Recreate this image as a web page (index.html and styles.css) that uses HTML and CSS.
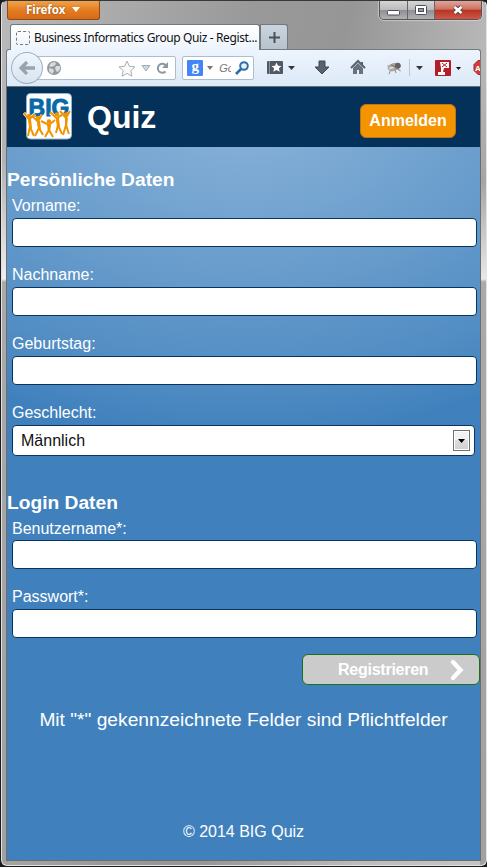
FILE: index.html
```
<!DOCTYPE html>
<html lang="de">
<head>
<meta charset="utf-8">
<title>Business Informatics Group Quiz - Registrierung</title>
<link rel="stylesheet" href="styles.css">
</head>
<body>
<div class="window">
  <div class="titlebar">
    <div class="firefox">Firefox<svg width="8" height="5"><path d="M0 0h8L4 5z" fill="#fff"/></svg></div>
    <div class="controls">
      <span class="ctl min"><svg width="13" height="6"><rect x=".5" y=".5" width="12" height="4.5" rx="1" fill="#fff" stroke="#4b5060"/></svg></span>
      <span class="ctl max"><svg width="12" height="10"><rect x=".5" y=".5" width="11" height="9" rx="1" fill="#fff" stroke="#4b5060"/><rect x="3.5" y="3.5" width="5" height="3" fill="#999" stroke="#4b5060"/></svg></span>
      <span class="ctl close"><svg width="12" height="10"><path d="M2.500 2l7 6M9.500 2l-7 6" stroke="#5a4547" stroke-width="4.600"/><path d="M2.500 2l7 6M9.500 2l-7 6" stroke="#fff" stroke-width="2.600"/></svg></span>
    </div>
  </div>
  <div class="tabs">
    <div class="tab"><span class="favicon"></span><span class="tab-title">Business Informatics Group Quiz - Regist...</span></div>
    <div class="newtab"><svg width="11" height="11"><path d="M5.500 0v11M0 5.500h11" stroke="#4a5157" stroke-width="2"/></svg></div>
  </div>
  <div class="toolbar">
    <div class="back"><svg width="16" height="14"><path d="M8 1L2 7l6 6M2 7h14" fill="none" stroke="#97a3ad" stroke-width="3.300"/></svg></div>
    <div class="url">
      <svg class="globe" width="14" height="14"><circle cx="7" cy="7" r="7" fill="#94989c"/><path d="M4 2l4-1 1 2-2 2-3 1-2-1zM9 5l4 0 0 3-2 3-2-1-1-3zM2 7l4 1 1 2-2 3-3-3z" fill="#d9dcde"/></svg>
      <svg class="star" width="18" height="17"><path d="M9 1l2.400 5.300 5.600.6-4.200 3.800 1.200 5.500-5-2.800-5 2.800 1.200-5.500L1 6.900l5.600-.6z" fill="#fafafa" stroke="#a9adb1"/></svg>
      <svg class="drop" width="10" height="7"><path d="M1 .5h8L5 6z" fill="#d0d9e3" stroke="#a3adb8"/></svg>
      <svg class="reload" width="13" height="12"><path d="M9.500 9.500a4.500 4.500 0 1 1 .3-6" fill="none" stroke="#8c98a5" stroke-width="2"/><path d="M12 0v6H6z" fill="#8c98a5"/></svg>
    </div>
    <div class="search">
      <span class="g">g</span>
      <svg width="6" height="4"><path d="M0 0h6L3 4z" fill="#777"/></svg>
      <i>Go</i>
      <svg class="lens" width="14" height="14"><circle cx="9" cy="5" r="3.800" fill="#e7f3fc" stroke="#2e6da9" stroke-width="2"/><path d="M6 8l-5 5" stroke="#2e6da9" stroke-width="2.700"/></svg>
    </div>
    <svg class="tools" width="213" height="34" viewBox="0 0 213 34">
      <rect x="0" y="10" width="16" height="13" rx="1" fill="#4f5963"/><path d="M2.500 10v13" stroke="#89929a"/><path d="M9.500 11.500l1.500 3.200 3.500.3-2.600 2.300.8 3.500-3.200-1.800-3.200 1.800.8-3.500L4.500 15l3.500-.3z" fill="#fff"/>
      <path d="M21 15h7l-3.500 4z" fill="#303a43"/>
      <path d="M52 10h6v6h4l-7 7-7-7h4z" fill="#59636e" stroke="#414a53"/>
      <path d="M84 17l7-7 7 7" fill="none" stroke="#56626e" stroke-width="2"/><path d="M86 17l5-5 5 5v6h-4v-4h-2v4h-4z" fill="#67727d"/><path d="M95 11v4" stroke="#56626e" stroke-width="2"/>
      <g transform="translate(127 16) rotate(-18)"><path d="M-4 2l-3 3M0 3v3.500M3 3l2 3M-4-2l-2-1" stroke="#8b8b8b"/><ellipse rx="6.500" ry="4" fill="#aaa69f"/><circle cx="4" r="3" fill="#64615d"/><path d="M-5 0h6" stroke="#d8d8d8" stroke-width="2"/><path d="M-2-3l4 5" stroke="#77736e"/></g>
      <path d="M142.500 8v17" stroke="#bbc6d2"/><path d="M149 15h7l-3.500 4z" fill="#303a43"/>
      <rect x="168" y="9" width="16" height="16" rx="1" fill="#b41c27"/><path d="M173 11h9v6h-5l-1 4h2v3h-7v-3h3v-4z" fill="#fff"/><path d="M175 12l5 4M180 12l-5 4" stroke="#b41c27"/>
      <path d="M189 16h5l-2.500 3z" fill="#111"/>
      <path d="M211 9.500l-4 4v6l4 4h6v-14z" fill="#d83a35" stroke="#8c3430"/>
      <text x="208" y="19.500" class="abp">A</text>
    </svg>
  </div>
  <main class="page">
    <header class="header">
      <svg class="logo" width="50" height="48" viewBox="0 0 50 48">
        <rect x="3.500" y=".5" width="45" height="45.500" rx="4" fill="#fff" stroke="#8ab7d8"/>
        <text x="5.500" y="22.500" class="big" textLength="41" lengthAdjust="spacingAndGlyphs">BIG</text>
        <path class="halo" d="M1 20l5 6 6-5M8 24l7 4 4-6M18 29l8 3 6-5M27 20l7 5 6-6M36 19l7 6 4-7"/>
        <g class="people">
          <path d="M1 20l5 6.500 6-5.500M6 27l1 6-2 10M7 34l4 9"/>
          <path d="M9 23l6 5.500 4-7M15 29l1 6-4 8M16 35l4 7"/>
          <path d="M18 28l8 4 6-5M26 32v5l-4 7M26 37l4 7"/>
          <path d="M27 19l7 6.500 5-4M34 26l1 6-2 8M35 32l4 9"/>
          <path d="M37 18l6 7 4-7M43 25v7l-3 10M43 32l3 9"/>
        </g>
        <path d="M5 26h3l1 9-2 1zM14 28h3l1 8h-3zM24 32h4l-1 7h-2zM33 25h3l1 9h-3zM42 25h3l-1 9h-2z" fill="#f29400"/>
        <g fill="#f29400"><circle cx="6" cy="23" r="2.200"/><circle cx="15" cy="25" r="2.200"/><circle cx="26" cy="28.500" r="2.200"/><circle cx="34" cy="21.500" r="2.200"/><circle cx="43" cy="21.500" r="2.200"/></g>
      </svg>
      <h1>Quiz</h1>
      <a class="login">Anmelden</a>
    </header>
    <h2>Persönliche Daten</h2>
    <label>Vorname:</label><div class="field"></div>
    <label>Nachname:</label><div class="field"></div>
    <label>Geburtstag:</label><div class="field"></div>
    <label>Geschlecht:</label>
    <div class="field select"><span>Männlich</span><span class="arrow"><svg width="7" height="4"><path d="M0 0h7L3.500 4z"/></svg></span></div>
    <h2 class="second">Login Daten</h2>
    <label>Benutzername*:</label><div class="field"></div>
    <label>Passwort*:</label><div class="field"></div>
    <div class="submit"><span>Registrieren</span><svg width="14" height="22"><path d="M3 3l7.500 8L3 19" fill="none" stroke="#fff" stroke-width="4.300" stroke-linecap="round"/></svg></div>
    <p class="note">Mit "*" gekennzeichnete Felder sind Pflichtfelder</p>
    <footer>© 2014 BIG Quiz</footer>
  </main>
</div>
</body>
</html>
```
FILE: styles.css
```
* { box-sizing: border-box; }
body { margin: 0; background: #1c1c1e; font: 16px "Liberation Sans", sans-serif; }
svg { display: block; flex: none; }
.window {
  width: 486px; height: 866px; margin-left: 1px; padding: 0 5px 5px; overflow: hidden;
  border: 1px solid #e2e2e2; border-top-color: #383838; border-radius: 6px;
  background:
    linear-gradient(180deg, transparent 80px, #aaa4 160px, #eee 278px, #aaa 281px, #a1a1a1) left / 6px 100% no-repeat,
    linear-gradient(180deg, transparent 60px, #a5a5a5 180px, #e8e8e8 278px, #aaa 281px, #a1a1a1) right / 6px 100% no-repeat,
    linear-gradient(100deg, #b9b9b9, #999 40%, #969696 55%, #bcbcbc 80%, #c5c5c5);
}
.titlebar { display: flex; justify-content: space-between; height: 23px; }
.firefox {
  display: flex; align-items: center; gap: 7px; width: 93px; height: 19px; padding: 0 0 2px 18px;
  border: 1px solid #8d4a1d; border-top: 0; border-radius: 0 0 3px 3px;
  background: linear-gradient(#f0a34a, #e47d22 50%, #d96918);
  color: #fff; font: bold 11.500px "Noto Sans", sans-serif; letter-spacing: -.05px; text-shadow: 0 0 2px #8a3d00;
}
.controls { display: flex; width: 103px; height: 19px; margin-right: -1px; border: 1px solid #55555a; border-top: 0; border-radius: 0 0 5px 5px; overflow: hidden; box-shadow: 0 0 1px 1px #ddd9; }
.ctl { display: flex; align-items: center; justify-content: center; background: linear-gradient(#d5d5d5, #bbb 48%, #8f8f91 50%, #b1b1b3); }
.min { width: 28px; padding-top: 5px; border-right: 1px solid #66666a; }
.max { width: 27px; border-right: 1px solid #66666a; }
.close { flex: 1; background: linear-gradient(#dfa59a, #d0705f 46%, #b63422 50%, #cf5744); }
.tabs { display: flex; height: 25px; padding-left: 3px; }
.tab {
  display: flex; align-items: center; width: 250px; height: 26px; padding-left: 5px;
  border: 1px solid #727981; border-bottom: 0; border-radius: 3px 3px 0 0;
  background: linear-gradient(#fff, #edf4fd); position: relative; z-index: 1;
}
.favicon { width: 14px; height: 14px; border: 1px dashed #777; border-radius: 2px; }
.tab-title { margin-left: 4px; font: 12px/16px "Noto Sans", sans-serif; letter-spacing: -.38px; white-space: nowrap; color: #111; }
.newtab { display: flex; align-items: center; justify-content: center; width: 28px; height: 25px; border: 1px solid #717980; border-bottom: 0; border-radius: 0 3px 0 0; background: linear-gradient(#cbd5df, #b6c2cd); }
.toolbar {
  display: flex; align-items: center; height: 38px; margin-left: -1px; width: 475px; padding-left: 4px; overflow: hidden;
  border: 1px solid #737a80; border-bottom-color: #adc8df; border-radius: 3px 3px 0 0;
  background: linear-gradient(#edf4fd, #dce9f7);
}
.back { display: flex; align-items: center; justify-content: center; width: 32px; height: 32px; border: 1px solid #a1b0be; border-radius: 50%; background: linear-gradient(#eef5fc, #d8e4f1); z-index: 1; position: relative; }
.url, .search { display: flex; align-items: center; height: 24px; border: 1px solid #aebdcc; border-radius: 2px; background: #fff; }
.url { width: 142px; margin-left: -8px; padding-left: 11px; }
.star { margin-left: 57px; }
.drop { margin-left: 5px; }
.reload { margin-left: 5px; }
.search { width: 72px; margin-left: 6px; padding-left: 4px; overflow: hidden; }
.g { width: 16px; height: 16px; border-radius: 1px; background: #4285f4; color: #fff; font: bold 15px/12px "Liberation Serif", serif; text-align: center; }
.search > svg { margin-left: 4px; }
.search i { width: 12px; margin-left: 6px; overflow: hidden; font-size: 11px; color: #777; white-space: nowrap; }
.search .lens { margin-left: 4px; }
.tools { margin-left: 13px; }
.abp { font: bold 8px "Liberation Sans", sans-serif; fill: #fff; }
.page {
  width: 473px; height: 773px; overflow: hidden; color: #fff;
  background: radial-gradient(500px 350px at 50% 0, #8db5da 0, #6b9ecd 50%, #4f8bc2 86%, #4081bd);
  outline: 1px solid #6d6d6d;
}
.header { display: flex; height: 60px; padding-left: 16px; background: #033159; }
.logo { margin-top: 6px; }
.big { font: bold 23px "Liberation Sans", sans-serif; fill: #0869a9; stroke: #0869a9; stroke-width: .9px; }
.halo { fill: none; stroke: #fff; stroke-width: 3px; }
.people { fill: none; stroke: #f29400; stroke-width: 2px; stroke-linejoin: round; }
h1 { margin: 0 0 0 14px; font-size: 32px; line-height: 60px; }
.login { width: 96px; height: 34px; margin: 17px 24px 0 auto; border: 1px solid #b9771c; border-radius: 6px; background: #f39400; font-weight: bold; line-height: 32px; text-align: center; }
h2 { margin: 21px 0 4px; height: 24px; font-size: 19.200px; line-height: 24px; }
label { display: block; height: 20px; margin: 0 0 2px 5px; line-height: 20px; }
.field { width: 465px; height: 29px; margin: 0 0 18px 5px; border: 1px solid #07355f; border-radius: 4px; background: #fff; }
.select { display: flex; align-items: center; justify-content: space-between; width: 463px; height: 31px; margin-bottom: 0; padding: 0 4px 0 8px; color: #111; }
.arrow { display: flex; align-items: center; justify-content: center; width: 17px; height: 21px; border: 1px solid #707070; box-shadow: inset 0 0 0 1px #fff; background: linear-gradient(#f2f2f2 48%, #ddd 50%, #cfcfcf); }
.second { margin: 35px 0 4px; }
.second ~ label { margin-bottom: 1px; }
.second ~ .field { margin-bottom: 19px; }
.second ~ .field + label { margin-bottom: 2px; margin-top: -1px; }
.submit { display: flex; align-items: center; width: 178px; height: 31px; margin: -3px 0 0 295px; padding-left: 35px; border: 1px solid #187018; border-radius: 6px; background: #cbcbcb; font-weight: bold; letter-spacing: -.25px; }
.submit span { width: 110px; }
.submit svg { margin-left: 2px; }
.note { margin: 23px 0 0; font-size: 19.200px; line-height: 24px; text-align: center; }
footer { margin-top: 90px; line-height: 20px; text-align: center; }
```
